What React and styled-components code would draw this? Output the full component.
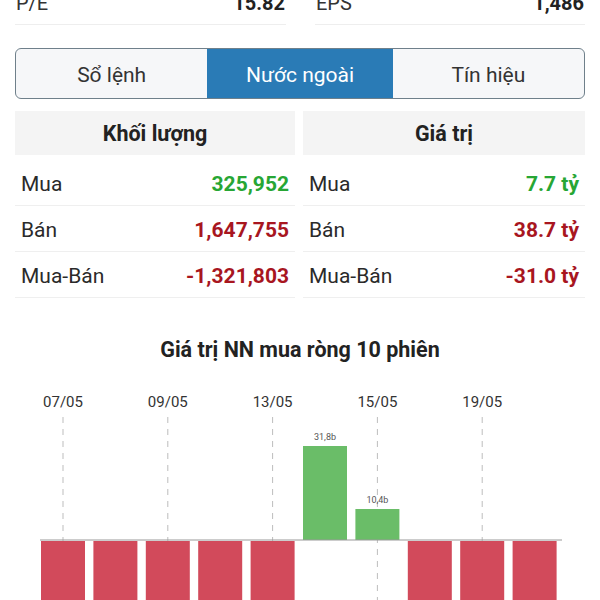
import React from "react";
import styled, { createGlobalStyle } from "styled-components";

const Global = createGlobalStyle`
  html, body { margin: 0; padding: 0; overflow: hidden; background: #fff; }
  body { font-family: Roboto, "Noto Sans", "Liberation Sans", sans-serif; color: #222; }
`;

const Page = styled.div`
  width: 600px;
  box-sizing: border-box;
  padding: 0 15px;
`;

const StatRow = styled.div`
  display: grid;
  grid-template-columns: 271px 270px;
  column-gap: 29px;
  margin-top: -19px;
`;

const Stat = styled.div`
  height: 43px;
  display: flex;
  align-items: center;
  justify-content: space-between;
  border-bottom: 1px solid #eeeeee;
  font-size: 20px;
`;

const StatLabel = styled.span`
  color: #333;
  padding-left: 1px;
`;

const StatValue = styled.span`
  font-weight: 700;
  color: #222;
  padding-right: 1px;
`;

const Tabs = styled.div`
  margin-top: 23px;
  height: 51px;
  box-sizing: border-box;
  display: flex;
  border: 1.5px solid #6f808b;
  border-radius: 6px;
  overflow: hidden;
  background: #f6f7f9;
`;

const Tab = styled.div`
  flex: ${(p) => p.$w};
  display: flex;
  align-items: center;
  justify-content: center;
  padding-top: 2px;
  font-size: 21px;
  color: ${(p) => (p.$active ? "#fff" : "#333")};
  background: ${(p) => (p.$active ? "#2a7bb6" : "transparent")};
`;

const Tables = styled.div`
  margin-top: 12px;
  display: grid;
  grid-template-columns: 280px 282px;
  column-gap: 8px;
`;

const Table = styled.div`
  display: flex;
  flex-direction: column;
`;

const Head = styled.div`
  height: 44px;
  background: #f4f4f4;
  display: flex;
  align-items: center;
  justify-content: center;
  font-weight: 700;
  font-size: 21.5px;
  color: #222;
  margin-bottom: 5px;
`;

const Row = styled.div`
  height: 46px;
  box-sizing: border-box;
  display: flex;
  align-items: center;
  justify-content: space-between;
  padding: 2px 6px 0;
  border-bottom: 1px solid #efefef;
  font-size: 21px;
`;

const Label = styled.span`
  color: #2a2a2a;
`;

const Value = styled.span`
  font-weight: 700;
  color: ${(p) => (p.$tone === "up" ? "#27a634" : "#a8161f")};
`;

const ChartTitle = styled.div`
  margin-top: 40px;
  text-align: center;
  font-weight: 700;
  font-size: 21.5px;
  line-height: 24px;
  color: #222;
`;

const ChartBox = styled.div`
  margin: 22px -15px 0;
  height: 220px;
`;

const Svg = styled.svg`
  display: block;
`;

const volume = [
  { label: "Mua", value: "325,952", tone: "up" },
  { label: "Bán", value: "1,647,755", tone: "down" },
  { label: "Mua-Bán", value: "-1,321,803", tone: "down" },
];
const worth = [
  { label: "Mua", value: "7.7 tỷ", tone: "up" },
  { label: "Bán", value: "38.7 tỷ", tone: "down" },
  { label: "Mua-Bán", value: "-31.0 tỷ", tone: "down" },
];

const bars = [
  { v: -1 }, { v: -1 }, { v: -1 }, { v: -1 }, { v: -1 },
  { v: 94, t: "31,8b" }, { v: 31, t: "10,4b" },
  { v: -1 }, { v: -1 }, { v: -1 },
];
const dates = ["07/05", "09/05", "13/05", "15/05", "19/05"];

function Chart() {
  const zero = 156;
  const x0 = 41;
  const pitch = 52.4;
  const w = 44;
  return (
    <Svg width="600" height="220" viewBox="0 0 600 220">
      {dates.map((d, k) => {
        const cx = x0 + k * 2 * pitch + w / 2;
        return (
          <g key={d}>
            <text x={cx} y="23" textAnchor="middle" fontSize="15" fill="#333" fontFamily="Roboto, sans-serif">{d}</text>
            <line x1={cx} x2={cx} y1="33" y2="220" stroke="#bdbdbd" strokeWidth="1" strokeDasharray="6 6" />
          </g>
        );
      })}
      {bars.map((b, i) => {
        const x = x0 + i * pitch;
        if (b.v > 0) {
          return (
            <g key={i}>
              <rect x={x} y={zero - b.v} width={w} height={b.v} fill="#6abd68" />
              <text x={x + w / 2} y={zero - b.v - 6} textAnchor="middle" fontSize="9" fill="#555" fontFamily="Roboto, sans-serif">{b.t}</text>
            </g>
          );
        }
        return <rect key={i} x={x} y={zero + 1} width={w} height="80" fill="#d24a5b" />;
      })}
      <line x1="40" x2="562" y1={zero} y2={zero} stroke="#9a9a9a" strokeWidth="1.2" />
    </Svg>
  );
}

export default function App() {
  return (
    <Page>
      <Global />
      <StatRow>
        <Stat><StatLabel>P/E</StatLabel><StatValue>15.82</StatValue></Stat>
        <Stat><StatLabel>EPS</StatLabel><StatValue>1,486</StatValue></Stat>
      </StatRow>
      <Tabs>
        <Tab $w={192}>Sổ lệnh</Tab>
        <Tab $w={186} $active>Nước ngoài</Tab>
        <Tab $w={192}>Tín hiệu</Tab>
      </Tabs>
      <Tables>
        <Table>
          <Head>Khối lượng</Head>
          {volume.map((r) => (
            <Row key={r.label}><Label>{r.label}</Label><Value $tone={r.tone}>{r.value}</Value></Row>
          ))}
        </Table>
        <Table>
          <Head>Giá trị</Head>
          {worth.map((r) => (
            <Row key={r.label}><Label>{r.label}</Label><Value $tone={r.tone}>{r.value}</Value></Row>
          ))}
        </Table>
      </Tables>
      <ChartTitle>Giá trị NN mua ròng 10 phiên</ChartTitle>
      <ChartBox><Chart /></ChartBox>
    </Page>
  );
}
